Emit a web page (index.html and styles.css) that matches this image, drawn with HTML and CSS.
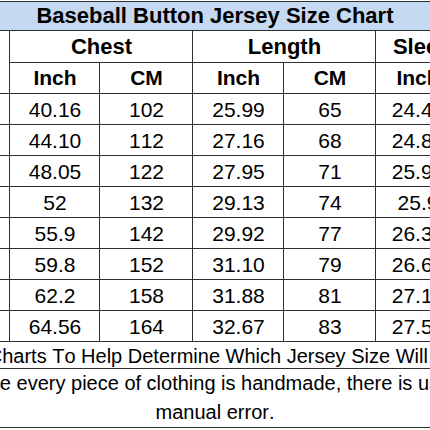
FILE: index.html
```html
<!DOCTYPE html>
<html>
<head>
<meta charset="utf-8">
<link rel="stylesheet" href="styles.css">
</head>
<body>
<div class="frame">
<table class="chart">
  <colgroup>
    <col class="c-size">
    <col class="c-ci"><col class="c-cc">
    <col class="c-li"><col class="c-lc">
    <col class="c-si"><col class="c-sc">
  </colgroup>
  <tr class="r-title"><td colspan="7">Baseball Button Jersey Size Chart</td></tr>
  <tr class="r-head">
    <td rowspan="2">Size</td>
    <td colspan="2">Chest</td>
    <td colspan="2">Length</td>
    <td colspan="2">Sleeve Length</td>
  </tr>
  <tr class="r-sub">
    <td>Inch</td><td>CM</td><td>Inch</td><td>CM</td><td>Inch</td><td>CM</td>
  </tr>
  <tr class="r-data"><td>S</td><td>40.16</td><td>102</td><td>25.99</td><td>65</td><td>24.41</td><td>62</td></tr>
  <tr class="r-data"><td>M</td><td>44.10</td><td>112</td><td>27.16</td><td>68</td><td>24.80</td><td>63</td></tr>
  <tr class="r-data"><td>L</td><td>48.05</td><td>122</td><td>27.95</td><td>71</td><td>25.98</td><td>66</td></tr>
  <tr class="r-data"><td>XL</td><td>52</td><td>132</td><td>29.13</td><td>74</td><td>25.9</td><td>66</td></tr>
  <tr class="r-data"><td>2XL</td><td>55.9</td><td>142</td><td>29.92</td><td>77</td><td>26.38</td><td>67</td></tr>
  <tr class="r-data"><td>3XL</td><td>59.8</td><td>152</td><td>31.10</td><td>79</td><td>26.69</td><td>68</td></tr>
  <tr class="r-data"><td>4XL</td><td>62.2</td><td>158</td><td>31.88</td><td>81</td><td>27.16</td><td>69</td></tr>
  <tr class="r-data"><td>5XL</td><td>64.56</td><td>164</td><td>32.67</td><td>83</td><td>27.55</td><td>70</td></tr>
  <tr class="r-note"><td colspan="7"><div class="note-line"><span>Use the Size Charts To Help Determine Which Jersey Size Will Fit You Better.</span></div></td></tr>
  <tr class="r-note2"><td colspan="7">Because every piece of clothing is handmade, there is usually a<br>manual error.</td></tr>
</table>
</div>
</body>
</html>
```
FILE: styles.css
```css
html, body {
  margin: 0;
  padding: 0;
  background: #ffffff;
}
body {
  width: 430px;
  height: 430px;
  overflow: hidden;
  font-family: "Liberation Sans", Arial, sans-serif;
  font-kerning: none;
  color: #000;
}
.frame {
  display: flex;
  justify-content: center;
  width: 430px;
  padding-top: 1px;
}
.chart {
  flex: none;
  width: 688px;
  table-layout: fixed;
  border-collapse: collapse;
}
.c-size { width: 139px; }
.c-ci { width: 90px; }
.c-cc { width: 93px; }
.c-li { width: 91px; }
.c-lc { width: 92px; }
.c-si { width: 84px; }
.c-sc { width: 99px; }
.chart td {
  border: 1px solid #2e2e2e;
  padding: 0;
  text-align: center;
  vertical-align: middle;
  white-space: nowrap;
  font-size: 21px;
  line-height: 24px;
}
.r-title td {
  height: 28px;
  background: #c5d9f1;
  font-weight: bold;
  font-size: 22px;
}
.r-head td {
  height: 31px;
  font-weight: bold;
  font-size: 22px;
}
.r-sub td {
  height: 30px;
  font-weight: bold;
  font-size: 21px;
}
.r-data td {
  height: 28px;
  padding-top: 2px;
}
.r-note td {
  height: 24px;
  font-size: 20px;
  padding-top: 2px;
}
.note-line {
  display: flex;
  justify-content: center;
}
.note-line span {
  flex: none;
}
.r-note2 td {
  height: 57px;
  font-size: 20px;
  line-height: 29px;
}
```
